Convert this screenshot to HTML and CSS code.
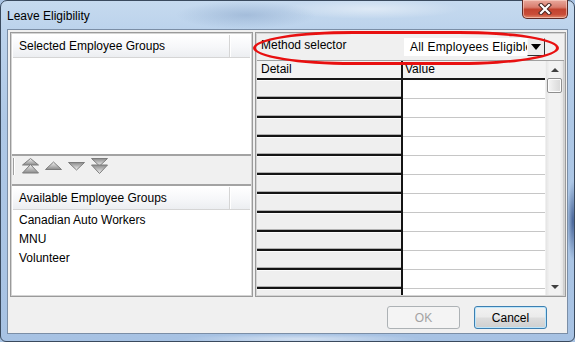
FILE: index.html
```html
<!DOCTYPE html>
<html lang="en">
<head>
    <meta charset="UTF-8">
    <meta name="viewport" content="width=device-width, initial-scale=1.0">
    <title>Leave Eligibility</title>
    <link rel="stylesheet" href="styles.css">
</head>
<body>

<div class="window">
    <div class="titlebar">
        <span class="title">Leave Eligibility</span>
        <div class="close-btn">
            <svg width="14" height="12" viewBox="0 0 14 12">
                <path d="M3 2 L11 10 M11 2 L3 10" stroke="#4a2622" stroke-width="4.2" stroke-linecap="square"/>
                <path d="M3 2 L11 10 M11 2 L3 10" stroke="#ffffff" stroke-width="2.2" stroke-linecap="square"/>
            </svg>
        </div>
    </div>

    <div class="client">
        <div class="panels">
            <div class="left-panel">
                <div class="list list-selected">
                    <div class="list-header">
                        <span class="col-main">Selected Employee Groups</span>
                        <span class="col-rest"></span>
                    </div>
                </div>

                <div class="toolbar">
                    <span class="tb-sep"></span>
                    <!-- move to top / up / down / bottom -->
                    <svg class="tb-icon" width="17" height="16" viewBox="0 0 17 16">
                        <defs>
                            <linearGradient id="gUp" x1="0" y1="0" x2="0" y2="1">
                                <stop offset="0" stop-color="#f4f4f4"/>
                                <stop offset="1" stop-color="#8a8a8a"/>
                            </linearGradient>
                            <linearGradient id="gDown" x1="0" y1="0" x2="0" y2="1">
                                <stop offset="0" stop-color="#8a8a8a"/>
                                <stop offset="1" stop-color="#f4f4f4"/>
                            </linearGradient>
                        </defs>
                        <polygon points="8.5,0.5 16.5,7 0.5,7" fill="url(#gUp)" stroke="#7c7c7c"/>
                        <polygon points="8.5,6.5 16.5,15 0.5,15" fill="url(#gUp)" stroke="#7c7c7c"/>
                    </svg>
                    <svg class="tb-icon" width="17" height="16" viewBox="0 0 17 16">
                        <polygon points="8.5,4 16.5,11.5 0.5,11.5" fill="url(#gUp)" stroke="#7c7c7c"/>
                    </svg>
                    <svg class="tb-icon" width="17" height="16" viewBox="0 0 17 16">
                        <polygon points="0.5,4.5 16.5,4.5 8.5,12" fill="url(#gDown)" stroke="#7c7c7c"/>
                    </svg>
                    <svg class="tb-icon" width="17" height="16" viewBox="0 0 17 16">
                        <polygon points="0.5,0.5 16.5,0.5 8.5,8" fill="url(#gDown)" stroke="#7c7c7c"/>
                        <polygon points="0.5,7 16.5,7 8.5,15.5" fill="url(#gDown)" stroke="#7c7c7c"/>
                    </svg>
                </div>

                <div class="list list-available">
                    <div class="list-header">
                        <span class="col-main">Available Employee Groups</span>
                        <span class="col-rest"></span>
                    </div>
                    <ul class="items">
                        <li>Canadian Auto Workers</li>
                        <li>MNU</li>
                        <li>Volunteer</li>
                    </ul>
                </div>
            </div>

            <div class="right-panel">
                <div class="method-row">
                    <span class="method-label">Method selector</span>
                    <div class="combo">
                        <span class="combo-text">All Employees Eligible</span>
                        <span class="combo-btn"><span class="combo-arrow"></span></span>
                    </div>
                </div>

                <div class="table-area">
                    <div class="grid">
                        <div class="th th-detail">Detail</div>
                        <div class="th th-value">Value</div>
                        <div class="td-detail"></div><div class="td-value"></div>
                        <div class="td-detail"></div><div class="td-value"></div>
                        <div class="td-detail"></div><div class="td-value"></div>
                        <div class="td-detail"></div><div class="td-value"></div>
                        <div class="td-detail"></div><div class="td-value"></div>
                        <div class="td-detail"></div><div class="td-value"></div>
                        <div class="td-detail"></div><div class="td-value"></div>
                        <div class="td-detail"></div><div class="td-value"></div>
                        <div class="td-detail"></div><div class="td-value"></div>
                        <div class="td-detail"></div><div class="td-value"></div>
                        <div class="td-detail"></div><div class="td-value"></div>
                        <div class="td-detail"></div><div class="td-value"></div>
                    </div>
                    <div class="scrollbar">
                        <span class="sb-arrow sb-up"></span>
                        <span class="sb-thumb"></span>
                        <span class="sb-track"></span>
                        <span class="sb-arrow sb-down"></span>
                    </div>
                </div>
            </div>
        </div>

        <div class="buttons">
            <button type="button" class="btn btn-disabled" disabled>OK</button>
            <button type="button" class="btn btn-default">Cancel</button>
        </div>
    </div>

    <!-- red annotation ring drawn over the method selector -->
    <div class="highlight-ring"></div>
</div>

</body>
</html>
```

FILE: styles.css
```css
* {
    box-sizing: border-box;
}
html, body {
    margin: 0;
    padding: 0;
}
body {
    width: 575px;
    height: 342px;
    overflow: hidden;
    font-family: "Liberation Sans", Arial, sans-serif;
    font-size: 12px;
    color: #000;
    background-color: #a9c3e3;
}
.window {
    position: relative;
    width: 575px;
    height: 342px;
    border: 1px solid #3a4a5e;
    border-radius: 7px 7px 6px 6px;
    padding: 0 6px 7px 6px;
    display: flex;
    flex-direction: column;
    background:
        radial-gradient(ellipse 70px 14px at 245px 14px, rgba(120, 150, 190, 0.4), transparent),
        radial-gradient(ellipse 90px 10px at 370px 8px, rgba(255, 255, 255, 0.45), transparent),
        radial-gradient(ellipse 6px 40px at 572px 220px, rgba(30, 60, 120, 0.7), transparent),
        radial-gradient(ellipse 120px 5px at 300px 338px, rgba(255, 255, 255, 0.5), transparent),
        linear-gradient(to bottom, #c6daef 0, #bcd3ec 28px, #aec8e6 120px, #a7c2e3 100%);
}
.titlebar {
    height: 28px;
    display: flex;
    align-items: center;
}
.title {
    font-size: 12px;
    color: #000;
    margin-top: 1px;
}
.close-btn {
    position: absolute;
    top: -1px;
    right: 6px;
    width: 46px;
    height: 19px;
    border: 1px solid #5e2b27;
    border-top: none;
    border-radius: 0 0 5px 5px;
    background: linear-gradient(to bottom, #e9a99d 0%, #d97d6e 40%, #c2432f 52%, #c94d38 80%, #e08a6c 100%);
    box-shadow: inset 0 0 0 1px rgba(255, 220, 210, 0.55);
    display: flex;
    align-items: center;
    justify-content: center;
}
.client {
    flex: 1;
    border: 1px solid #7b8ea6;
    background-color: #f0f0f0;
    display: flex;
    flex-direction: column;
}
.panels {
    height: 267px;
    display: flex;
    gap: 2px;
    padding: 2px 0 0 2px;
}
.left-panel {
    width: 243px;
    height: 265px;
    border: 1px solid #9a9a9a;
    box-shadow: inset 0 0 0 1px #d4d4d4;
    padding: 1px;
    display: flex;
    flex-direction: column;
}
.list {
    background-color: #fff;
    padding: 1px;
}
.list-selected {
    height: 122px;
    border-bottom: 2px solid #a3a3a3;
}
.list-available {
    flex: 1;
    border-top: 2px solid #a3a3a3;
}
.list-header {
    height: 23px;
    display: flex;
    background: linear-gradient(to bottom, #ffffff 0%, #f6f7f9 55%, #eceef1 100%);
    border-bottom: 1px solid #d5d5d5;
}
.list-header .col-main {
    width: 217px;
    padding-left: 6px;
    line-height: 22px;
    border-right: 1px solid #d5d5d5;
    box-shadow: 1px 0 0 #fff;
}
.list-header .col-rest {
    flex: 1;
}
.items {
    list-style: none;
    margin: 0;
    padding: 1px 0 0 0;
}
.items li {
    height: 19px;
    line-height: 19px;
    padding-left: 6px;
}
.toolbar {
    height: 28px;
    display: flex;
    align-items: flex-start;
    padding: 2px 0 0 1px;
}
.tb-sep {
    width: 2px;
    height: 17px;
    border-left: 1px solid #a0a0a0;
    border-right: 1px solid #fff;
    margin-right: 7px;
}
.tb-icon {
    margin: 0 6px 0 0;
}
.right-panel {
    width: 311px;
    height: 265px;
    border: 1px solid #9a9a9a;
    box-shadow: inset 0 0 0 1px #d4d4d4;
    padding: 1px;
    display: flex;
    flex-direction: column;
}
.method-row {
    height: 26px;
    display: flex;
    align-items: flex-start;
    padding-top: 4px;
}
.method-label {
    width: 147px;
    padding-left: 4px;
    line-height: 15px;
}
.combo {
    width: 141px;
    height: 18px;
    background-color: #fff;
    display: flex;
    overflow: hidden;
}
.combo-text {
    flex: 1;
    padding-left: 6px;
    line-height: 18px;
    letter-spacing: 0.2px;
    white-space: nowrap;
    overflow: hidden;
}
.combo-btn {
    width: 18px;
    height: 18px;
    background-color: #ececec;
    border: 1px solid #f8f8f8;
    border-right-color: #303030;
    border-bottom-color: #303030;
    display: flex;
    align-items: center;
    justify-content: center;
}
.combo-arrow {
    width: 0;
    height: 0;
    border-left: 5px solid transparent;
    border-right: 5px solid transparent;
    border-top: 6px solid #000;
}
.table-area {
    flex: 1;
    display: flex;
    border-top: 1px solid #a0a0a0;
    overflow: hidden;
}
.grid {
    width: 288px;
    display: grid;
    grid-template-columns: 146px 142px;
    grid-auto-rows: 19px;
    align-content: start;
}
.th {
    background-color: #f3f3f3;
    border-bottom: 2px solid #181818;
    line-height: 17px;
    padding-left: 4px;
}
.th-detail {
    border-right: 2px solid #181818;
}
.th-value {
    padding-left: 2px;
}
.td-detail {
    background-color: #efefef;
    border-bottom: 2px solid #141414;
    border-right: 2px solid #141414;
    box-shadow: inset 0 1px 0 #fbfbfb, inset 0 -1px 0 #b0b0b0;
}
.td-value {
    background-color: #fff;
    border-bottom: 1px solid #c6c6c6;
}
.scrollbar {
    width: 18px;
    margin-left: 1px;
    display: flex;
    flex-direction: column;
    align-items: center;
    background: linear-gradient(to right, #e4e4e4, #f2f2f2 20%, #f2f2f2 80%, #e4e4e4);
    border-right: 1px solid #cfcfcf;
}
.sb-arrow {
    height: 17px;
    width: 100%;
    display: flex;
    align-items: center;
    justify-content: center;
    position: relative;
}
.sb-up::after, .sb-down::after {
    content: "";
    width: 0;
    height: 0;
    border-left: 4px solid transparent;
    border-right: 4px solid transparent;
}
.sb-up::after {
    border-bottom: 4px solid #404040;
}
.sb-down::after {
    border-top: 4px solid #404040;
}
.sb-thumb {
    width: 15px;
    height: 15px;
    border: 1px solid #8f8f8f;
    border-radius: 2px;
    background: linear-gradient(to right, #f6f6f6, #e6e6e6 50%, #d8d8d8);
    box-shadow: inset 0 0 0 1px #fdfdfd;
}
.sb-track {
    flex: 1;
}
.buttons {
    flex: 1;
    display: flex;
    justify-content: flex-end;
    align-items: flex-start;
    gap: 14px;
    padding: 9px 20px 0 0;
}
.btn {
    width: 73px;
    height: 23px;
    border-radius: 3px;
    font-family: "Liberation Sans", Arial, sans-serif;
    font-size: 12px;
    padding: 0;
}
.btn-disabled {
    border: 1px solid #adb2b5;
    background-color: #f4f4f4;
    color: #a3a3a3;
}
.btn-default {
    border: 1px solid #3c7fb1;
    background: linear-gradient(to bottom, #f2f2f2 0%, #ebebeb 48%, #dddddd 52%, #cfcfcf 100%);
    box-shadow: inset 0 0 0 1px #bde6fb;
    color: #000;
}
.highlight-ring {
    position: absolute;
    left: 252px;
    top: 30px;
    width: 306px;
    height: 34px;
    border: 3px solid #e81010;
    border-radius: 100px / 17px;
    pointer-events: none;
}
```
